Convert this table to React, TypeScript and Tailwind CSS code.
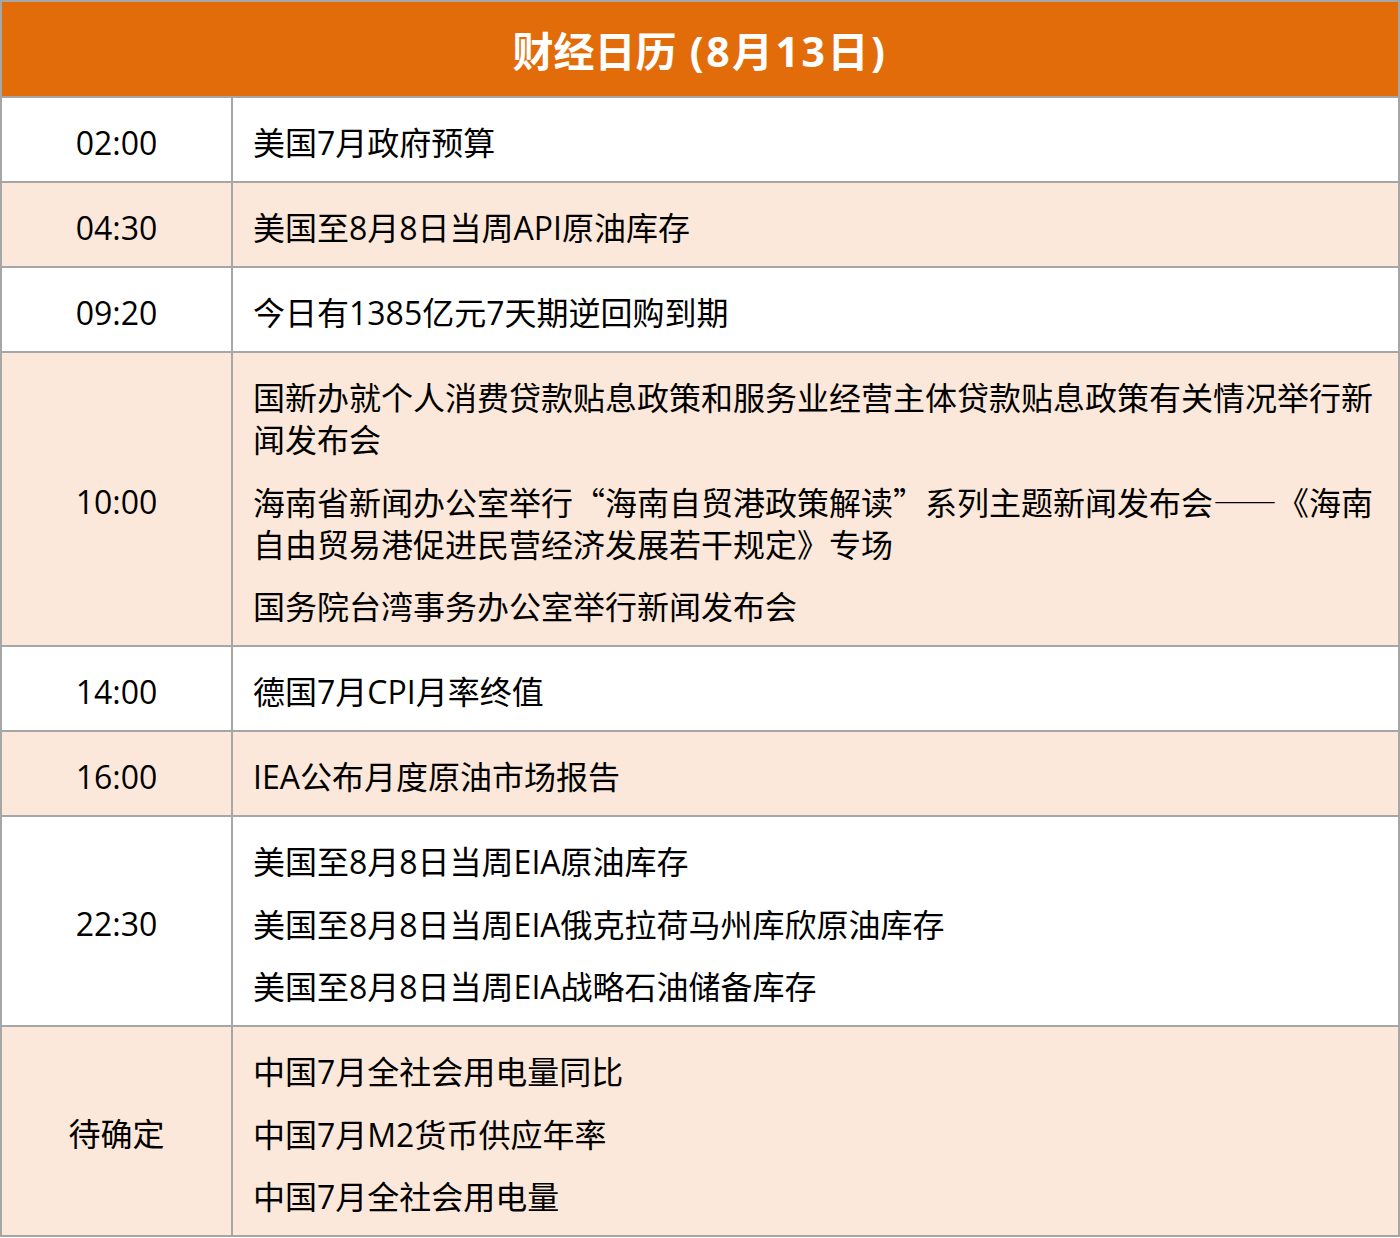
import React from 'react';

type Row = { time: string; items: React.ReactNode[]; shaded: boolean };

// CJK punctuation forced to the CJK face so it keeps full width
const P = ({ children }: { children: React.ReactNode }) => (
  <span className="font-['Noto_Sans_CJK_SC'] leading-none">{children}</span>
);

const rows: Row[] = [
  { time: '02:00', items: ['美国7月政府预算'], shaded: false },
  { time: '04:30', items: ['美国至8月8日当周API原油库存'], shaded: true },
  { time: '09:20', items: ['今日有1385亿元7天期逆回购到期'], shaded: false },
  {
    time: '10:00',
    items: [
      '国新办就个人消费贷款贴息政策和服务业经营主体贷款贴息政策有关情况举行新闻发布会',
      <>
        海南省新闻办公室举行<P>“</P>海南自贸港政策解读<P>”</P>系列主题新闻发布会
        <span className="font-['Noto_Sans_CJK_SC'] leading-none [font-feature-settings:'fwid']">——</span>
        <P>《</P>海南
        <br />
        自由贸易港促进民营经济发展若干规定<P>》</P>专场
      </>,
      '国务院台湾事务办公室举行新闻发布会',
    ],
    shaded: true,
  },
  { time: '14:00', items: ['德国7月CPI月率终值'], shaded: false },
  { time: '16:00', items: ['IEA公布月度原油市场报告'], shaded: true },
  {
    time: '22:30',
    items: [
      '美国至8月8日当周EIA原油库存',
      '美国至8月8日当周EIA俄克拉荷马州库欣原油库存',
      '美国至8月8日当周EIA战略石油储备库存',
    ],
    shaded: false,
  },
  {
    time: '待确定',
    items: ['中国7月全社会用电量同比', '中国7月M2货币供应年率', '中国7月全社会用电量'],
    shaded: true,
  },
];

export default function App() {
  return (
    <div className="w-[1400px] h-[1238px] bg-white font-['Open_Sans','Noto_Sans_CJK_SC',sans-serif] text-black">
      <div className="border-2 border-[#a6a6a6]">
        {/* Header */}
        <div className="h-[94px] bg-[#e36c0a] flex items-center justify-center">
          <h1 className="text-[41px] font-bold text-white leading-none pt-1">
            财经日历<span className="tracking-[2.5px]"> (8月13日)</span>
          </h1>
        </div>

        {rows.map((row, i) => (
          <div
            key={i}
            className={`flex border-t-2 border-[#a6a6a6] ${row.shaded ? 'bg-[#fce8da]' : 'bg-white'}`}
          >
            <div className="w-[231px] shrink-0 flex items-center justify-center pt-[6px] text-[32px] border-r-2 border-[#a6a6a6]">
              {row.time}
            </div>
            <div className="flex-1 px-[20px] pt-[24px] pb-[17px] flex flex-col gap-[20.5px] text-[32px] leading-[42px]">
              {row.items.map((item, j) => (
                <p key={j}>{item}</p>
              ))}
            </div>
          </div>
        ))}
      </div>
    </div>
  );
}
